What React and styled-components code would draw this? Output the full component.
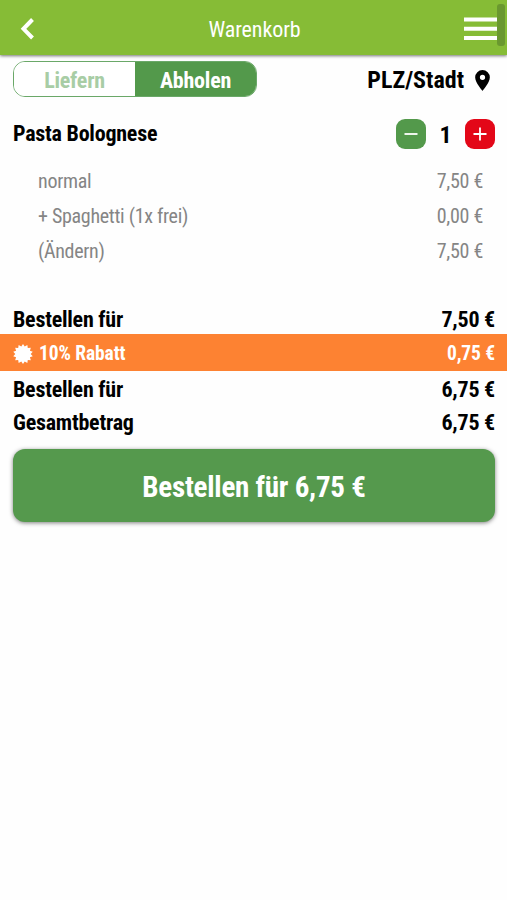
import { useState } from "react";
import styled, { createGlobalStyle } from "styled-components";

const GlobalStyle = createGlobalStyle`
  * {
    box-sizing: border-box;
  }
  body {
    margin: 0;
    background: #fefefe;
    color: #000;
    font-family: "Roboto Condensed", Roboto, sans-serif;
    font-stretch: 75%;
    letter-spacing: -0.23px;
  }
  button {
    border: 0;
    padding: 0;
    color: inherit;
    background: none;
    font: inherit;
    letter-spacing: inherit;
    cursor: pointer;
  }
`;

const Page = styled.div`
  min-height: 900px;
  overflow: hidden;
`;

const Header = styled.header`
  position: relative;
  display: grid;
  grid-template-columns: 60px 1fr 60px;
  align-items: center;
  height: 55px;
  padding: 3px 10px 0 12px;
  color: #fff;
  background: #86bc36;
  box-shadow: 0 1px 3px rgba(0, 0, 0, 0.55);
  & svg {
    display: block;
  }
`;

const Title = styled.h1`
  margin: 0;
  font-size: 22px;
  font-weight: 400;
  letter-spacing: -0.1px;
  text-align: center;
`;

const MenuButton = styled.button`
  justify-self: end;
`;

const ScrollThumb = styled.div`
  position: absolute;
  top: 4px;
  right: 2px;
  width: 8px;
  height: 42px;
  border-radius: 3px;
  background: #6a982f;
`;

const Toolbar = styled.div`
  display: flex;
  align-items: center;
  justify-content: space-between;
  height: 36px;
  margin: 6px 13px 0;
`;

const Toggle = styled.div`
  display: flex;
  width: 244px;
  height: 36px;
  border: 1px solid #6aa868;
  border-radius: 12px;
  overflow: hidden;
`;

const ToggleOption = styled.button`
  flex: 1;
  padding-top: 3px;
  font-size: 22px;
  font-weight: 700;
  color: ${({ $active }) => ($active ? "#fff" : "#a8cda5")};
  background: ${({ $active }) => ($active ? "#53994b" : "#fff")};
`;

const Place = styled.button`
  display: flex;
  align-items: center;
  gap: 11px;
  padding: 2px 4px 0 0;
  font-size: 24px;
  font-weight: 700;
  letter-spacing: 0;
`;

const ItemHead = styled.div`
  display: flex;
  align-items: center;
  justify-content: space-between;
  height: 30px;
  margin: 22px 12px 0 13px;
  font-size: 22px;
  font-weight: 700;
`;

const ItemName = styled.span`
  padding-bottom: 2px;
`;

const Counter = styled.div`
  display: flex;
  align-items: center;
  justify-content: space-between;
  width: 99px;
  font-size: 24px;
`;

const Count = styled.span`
  padding-top: 2px;
`;

const CounterButton = styled.button`
  display: flex;
  align-items: center;
  justify-content: center;
  width: 30px;
  height: 30px;
  border-radius: 9px;
  background: ${({ $color }) => $color};
`;

const Extras = styled.div`
  padding: 14px 24px 32px 38px;
  font-size: 20px;
  letter-spacing: -0.3px;
  color: #858585;
`;

const ExtraRow = styled.div`
  display: flex;
  align-items: center;
  justify-content: space-between;
  height: 35.3px;
`;

const SumRow = styled.div`
  display: flex;
  align-items: center;
  justify-content: space-between;
  height: 33px;
  padding: 4px 12px 0 13px;
  font-size: 22px;
  font-weight: 700;
`;

const DiscountRow = styled(SumRow)`
  height: 37px;
  padding-top: 3px;
  font-size: 19.5px;
  letter-spacing: -0.1px;
  color: #fff;
  background: #fd8232;
`;

const DiscountLabel = styled.span`
  display: flex;
  align-items: center;
  gap: 6px;
`;

const OrderButton = styled.button`
  display: block;
  width: 482px;
  height: 73px;
  margin: 12px 12px 0 13px;
  padding-top: 3px;
  border-radius: 12px;
  font-size: 29px;
  font-weight: 700;
  color: #fff;
  background: #55994d;
  box-shadow: 0 1px 4px rgba(0, 0, 0, 0.5);
`;

const BackIcon = () => (
  <svg width="26" height="26" viewBox="0 0 26 26" fill="none" stroke="#fff" strokeWidth="4">
    <path d="M20.5 3.5L11.5 12.8L20.5 22" />
  </svg>
);

const MenuIcon = () => (
  <svg width="33" height="24" viewBox="0 0 33 24" fill="#fff">
    <path d="M0 0.5h33v4H0zM0 9.8h33v4H0zM0 19h33v4H0z" />
  </svg>
);

const PinIcon = () => (
  <svg width="15" height="21" viewBox="0 0 14 20">
    <path
      fillRule="evenodd"
      d="M7 0a7 7 0 0 0-7 7c0 5.2 7 13 7 13s7-7.8 7-13a7 7 0 0 0-7-7zm0 4.5a2.5 2.5 0 1 1 0 5 2.5 2.5 0 0 1 0-5z"
    />
  </svg>
);

const SignIcon = ({ plus }) => (
  <svg width="14" height="14" viewBox="0 0 14 14" stroke="#fff" strokeWidth="1.8">
    <path d={plus ? "M0.5 7h13M7 0.5v13" : "M0.5 7h13"} />
  </svg>
);

const TEETH = 14;
const sealPoints = Array.from({ length: TEETH * 2 }, (_, i) => {
  const r = i % 2 ? 7.7 : 10;
  const a = (i * Math.PI) / TEETH;
  return `${(10 + r * Math.sin(a)).toFixed(2)},${(10 - r * Math.cos(a)).toFixed(2)}`;
}).join(" ");

const SealIcon = () => (
  <svg width="20" height="20" viewBox="0 0 20 20" fill="#fff">
    <polygon points={sealPoints} />
  </svg>
);

const extras = [
  { name: "normal", price: "7,50 €" },
  { name: "+ Spaghetti (1x frei)", price: "0,00 €" },
  { name: "(Ändern)", price: "7,50 €" },
];

export default function App() {
  const [mode, setMode] = useState("Abholen");
  const [count, setCount] = useState(1);

  return (
    <Page>
      <GlobalStyle />
      <Header>
        <button>
          <BackIcon />
        </button>
        <Title>Warenkorb</Title>
        <MenuButton>
          <MenuIcon />
        </MenuButton>
        <ScrollThumb />
      </Header>
      <Toolbar>
        <Toggle>
          {["Liefern", "Abholen"].map((name) => (
            <ToggleOption key={name} $active={mode === name} onClick={() => setMode(name)}>
              {name}
            </ToggleOption>
          ))}
        </Toggle>
        <Place>
          PLZ/Stadt
          <PinIcon />
        </Place>
      </Toolbar>
      <ItemHead>
        <ItemName>Pasta Bolognese</ItemName>
        <Counter>
          <CounterButton $color="#53994b" onClick={() => setCount(Math.max(0, count - 1))}>
            <SignIcon />
          </CounterButton>
          <Count>{count}</Count>
          <CounterButton $color="#e30718" onClick={() => setCount(count + 1)}>
            <SignIcon plus />
          </CounterButton>
        </Counter>
      </ItemHead>
      <Extras>
        {extras.map(({ name, price }) => (
          <ExtraRow key={name}>
            <span>{name}</span>
            <span>{price}</span>
          </ExtraRow>
        ))}
      </Extras>
      <SumRow>
        <span>Bestellen für</span>
        <span>7,50 €</span>
      </SumRow>
      <DiscountRow>
        <DiscountLabel>
          <SealIcon />
          10% Rabatt
        </DiscountLabel>
        <span>0,75 €</span>
      </DiscountRow>
      <SumRow>
        <span>Bestellen für</span>
        <span>6,75 €</span>
      </SumRow>
      <SumRow>
        <span>Gesamtbetrag</span>
        <span>6,75 €</span>
      </SumRow>
      <OrderButton>Bestellen für 6,75 €</OrderButton>
    </Page>
  );
}
